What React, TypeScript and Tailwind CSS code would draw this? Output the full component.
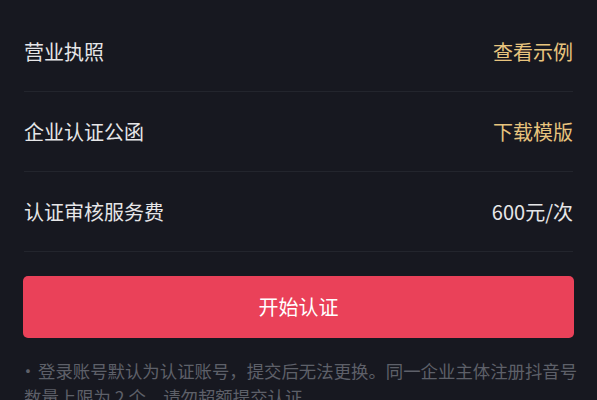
const ROWS = [
  { label: '营业执照', value: '查看示例', link: true },
  { label: '企业认证公函', value: '下载模版', link: true },
  { label: '认证审核服务费', value: '600元/次', link: false },
]

export default function App() {
  return (
    <div
      className="h-[400px] w-[597px] overflow-hidden bg-[#171820] px-6 pt-3"
      style={{ fontFamily: '"Noto Sans CJK SC", "Noto Sans", sans-serif' }}
    >
      {ROWS.map((row) => (
        <div
          key={row.label}
          className="flex h-20 items-center justify-between border-b border-[#23252d] text-[20px]"
        >
          <span className="text-[#e6e6e8]">{row.label}</span>
          <span className={row.link ? 'text-[#e8c47e]' : 'text-[#e6e6e8]'}>{row.value}</span>
        </div>
      ))}

      <button
        type="button"
        className="-mx-px mt-6 flex h-[62px] w-[calc(100%+2px)] items-center justify-center rounded-[5px] bg-[#ea4159] text-[20px] text-white"
      >
        开始认证
      </button>

      {/* line break kept where the original wraps */}
      <p className="-mr-2 mt-5 whitespace-nowrap text-[17.4px] leading-[26px] text-[#5e6069]">
        <span className="-ml-[6px] inline-block w-[20px] text-center">·</span>
        登录账号默认为认证账号，提交后无法更换。同一企业主体注册抖音号
        <br />
        数量上限为 2 个，请勿超额提交认证。
      </p>
    </div>
  )
}
